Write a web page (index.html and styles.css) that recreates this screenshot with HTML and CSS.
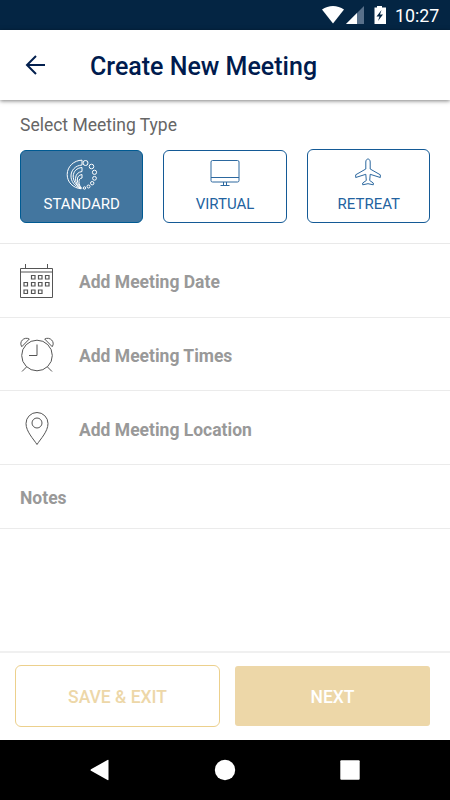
FILE: index.html
```html
<!DOCTYPE html>
<html lang="en">

<head>
    <meta charset="UTF-8">
    <title>Create New Meeting</title>
    <link rel="stylesheet" href="styles.css">
</head>

<body>
    <div class="app">
        <div class="status">
            <svg class="signals" width="68" height="30" viewBox="0 0 68 30">
                <path d="M1 9.500C7.500 4.700 16.500 4.700 23 9.500L12 23.500z" fill="#fff" />
                <path d="M43 6v18H25z" fill="#58708a" />
                <path d="M36 13v11H25z" fill="#fff" />
                <path d="M53.500 7.500H56V6h5v1.500h4V24H53.500z" fill="#fff" />
                <path d="M60.500 10l-5 6.500h3l-1.500 4.500 5-6.500h-3z" fill="#042543" />
            </svg>
            <span class="time">10:27</span>
        </div>

        <header class="header">
            <a href="#" class="back">
                <svg width="22" height="20" viewBox="0 0 22 20">
                    <path d="M20 10H2.500M11 1L2 10l9 9" />
                </svg>
            </a>
            <h1>Create New Meeting</h1>
        </header>

        <section class="types">
            <h2>Select Meeting Type</h2>
            <div class="cards">
                <a href="#" class="card active">
                    <svg width="32" height="32" viewBox="0 0 32 32">
                        <path d="M16 1.200C8 1.200 1.200 7.500 1.200 15.500c0 7.500 5.500 13.500 14 14.300" />
                        <path d="M16 1.200V6C9 6.500 5 11.500 5 17c0 5 3 10 10 12.500" />
                        <path d="M16 8.500v4c-4 .5-6.300 3-6.500 7 0 4 2 7.500 5.500 10M16 8.500c-5.500.5-8.500 4-8.800 8.500 0 4 2 8.500 7 12" />
                        <path d="M16 15.500v3.500c-2 .3-3 1.500-3 3.500 0 3 1 5 2.500 6.800M16 15.500c-3.300.5-4.700 2.500-4.700 5.500 0 3 1.500 6 4.500 8.500" />
                        <circle cx="19.500" cy="4" r="2.500" />
                        <circle cx="25.500" cy="7.500" r="2.300" />
                        <circle cx="28.500" cy="13.300" r="2.100" />
                        <circle cx="28.500" cy="19.300" r="1.900" />
                        <circle cx="26.200" cy="24.200" r="1.700" />
                        <circle cx="22.500" cy="27.500" r="1.500" />
                        <circle cx="18.500" cy="29" r="1.200" />
                    </svg>
                    <span>STANDARD</span>
                </a>
                <a href="#" class="card">
                    <svg width="32" height="32" viewBox="0 0 32 32">
                        <rect x="2" y="1.500" width="28" height="21.500" rx="1.500" />
                        <path d="M2 18.500h28M14.500 23v3.500M17.500 23v3.500M11.500 26.500h9" />
                    </svg>
                    <span>VIRTUAL</span>
                </a>
                <a href="#" class="card tall">
                    <svg width="32" height="32" viewBox="0 0 32 32">
                        <path d="M13.800 11V4c0-4 4.400-4 4.400 0v7l10.100 5.800v2.700l-10.100-3.200-.5 6.200 3.600 2.500v1.800L16 25.700l-5.300 1.100V25l3.600-2.500-.5-6.200-10.100 3.200v-2.700z" />
                    </svg>
                    <span>RETREAT</span>
                </a>
            </div>
        </section>

        <ul class="rows">
            <li>
                <svg width="36" height="36" viewBox="0 0 36 36">
                    <path d="M1.500 5.500h32v29h-32zM1.500 9h32M6.500 1v5M28.500 1v5" />
                    <path class="days" d="M12.500 12.500h3.500v3.500h-3.500zM19.500 12.500h3.500v3.500h-3.500zM26.500 12.500h3.500v3.500h-3.500zM5 19.500h3.500v3.500H5zM12.500 19.500h3.500v3.500h-3.500zM19.500 19.500h3.500v3.500h-3.500zM26.500 19.500h3.500v3.500h-3.500zM5 27h3.500v3.500H5zM12.500 27h3.500v3.500h-3.500zM19.500 27h3.500v3.500h-3.500z" />
                </svg>
                <span>Add Meeting Date</span>
            </li>
            <li>
                <svg width="36" height="36" viewBox="0 0 36 36">
                    <circle cx="18" cy="18.500" r="15.300" />
                    <path d="M18 7.500v11h-8M7.500 30L3 34.500M28.500 30l4.500 4.500" />
                    <path d="M2.800 9.700C-.5 5 5-.8 10.300 2zM33.200 9.700C36.500 5 31-.8 25.700 2z" />
                </svg>
                <span>Add Meeting Times</span>
            </li>
            <li>
                <svg width="36" height="36" viewBox="0 0 36 36">
                    <path d="M18 33.500C14.500 28 7 20.500 7 12.500a11 11 0 0 1 22 0C29 20.500 21.500 28 18 33.500z" />
                    <circle cx="18" cy="12" r="5" />
                </svg>
                <span>Add Meeting Location</span>
            </li>
            <li class="notes"><span>Notes</span></li>
        </ul>

        <footer class="footer">
            <a href="#" class="save">SAVE &amp; EXIT</a>
            <a href="#" class="next">NEXT</a>
        </footer>

        <nav class="nav">
            <svg width="22" height="22" viewBox="0 0 22 22">
                <path d="M2 10.200L18.500 1q1-.5 1 .5v19q0 1-1 .5L2 11.800q-1-.8 0-1.600z" />
            </svg>
            <svg width="22" height="22" viewBox="0 0 22 22">
                <circle cx="11" cy="11" r="10.200" />
            </svg>
            <svg width="22" height="22" viewBox="0 0 22 22">
                <rect x="1.300" y="1.300" width="19.400" height="19.400" rx="1" />
            </svg>
        </nav>
    </div>
</body>

</html>
```

FILE: styles.css
```css
* {
    box-sizing: border-box;
}

body,
h1,
h2,
ul {
    margin: 0;
    padding: 0;
}

body {
    font-family: Roboto, sans-serif;
    background: #fff;
}

ul {
    list-style: none;
}

a {
    text-decoration: none;
}

svg {
    display: block;
    flex: none;
}

.app {
    display: flex;
    flex-direction: column;
    width: 450px;
    height: 800px;
    overflow: hidden;
}

/* status bar */
.status {
    display: flex;
    flex: none;
    height: 30px;
    padding-left: 321px;
    background: #042543;
}

.time {
    margin-left: 6px;
    font-size: 17.8px;
    line-height: 32px;
    color: #fff;
}

/* header */
.header {
    display: flex;
    flex: none;
    align-items: center;
    height: 70px;
    padding-left: 25px;
    box-shadow: 0 1px 4px rgba(0, 0, 0, .5);
}

.back {
    margin-right: 43px;
}

.back svg {
    fill: none;
    stroke: #03204f;
    stroke-width: 2;
}

.header h1 {
    font-size: 25px;
    font-weight: 500;
    line-height: 30px;
    padding-top: 4px;
    color: #001b4e;
}

/* meeting type */
.types {
    flex: none;
    height: 144px;
    padding: 15px 20px 0;
    border-bottom: 1px solid #e9e9e9;
}

.types h2 {
    font-size: 17.5px;
    font-weight: 400;
    line-height: 21px;
    color: #666;
}

.cards {
    display: flex;
    align-items: flex-end;
    gap: 20px;
    height: 87px;
}

.card {
    display: flex;
    flex: 1;
    flex-direction: column;
    align-items: center;
    height: 73px;
    padding-top: 8px;
    border: 1px solid #145a96;
    border-radius: 6px;
    font-size: 15px;
    line-height: 18px;
    color: #2363a0;
}

.card span {
    margin-top: 4px;
}

.card svg {
    fill: none;
    stroke: #2c689f;
    stroke-width: 1;
}

.tall {
    height: 74px;
}

.tall span {
    margin: 5px 0 0 1px;
}

.active {
    background: #43769f;
    border-color: #005a92;
    color: #fff;
}

.active svg {
    stroke: #fff;
}

/* rows */
.rows {
    flex: 1;
}

.rows li {
    display: flex;
    align-items: center;
    gap: 24px;
    height: 73.7px;
    padding: 2px 0 0 19px;
    border-bottom: 1px solid #ebebeb;
    font-size: 17.5px;
    font-weight: 700;
    color: #999;
}

.rows span {
    padding-top: 2px;
}

.rows svg {
    fill: none;
    stroke: #555;
    stroke-width: 1;
}

.rows .days {
    stroke-width: 1.2;
}

.rows .notes {
    height: 64px;
    padding: 0 0 0 20px;
}

/* buttons */
.footer {
    display: flex;
    flex: none;
    align-items: center;
    gap: 15px;
    height: 89px;
    padding: 0 20px 2px 15px;
    border-top: 2px solid #f0f0f0;
}

.footer a {
    font-size: 17.5px;
    font-weight: 500;
    text-align: center;
}

.save {
    width: 205px;
    height: 62px;
    border: 1px solid #ecd08c;
    border-radius: 6px;
    line-height: 62px;
    color: #edd7a8;
}

.next {
    width: 195px;
    height: 60px;
    border-radius: 3px;
    background: #edd7a8;
    line-height: 62px;
    color: #fff;
}

/* navigation bar */
.nav {
    display: flex;
    flex: none;
    align-items: center;
    gap: 103px;
    height: 60px;
    padding-left: 89px;
    background: #000;
}

.nav svg {
    fill: #fff;
}
```
